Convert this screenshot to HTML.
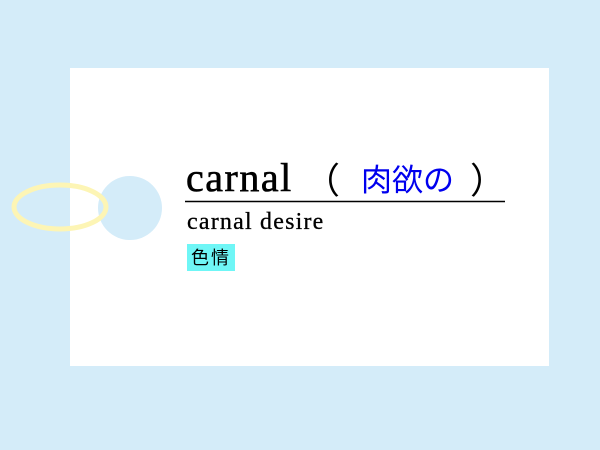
<!DOCTYPE html>
<html><head><meta charset="utf-8"><style>
html,body{margin:0;padding:0;}
body{width:600px;height:450px;background:#d4ecf9;position:relative;overflow:hidden;font-family:"Liberation Serif","Noto Serif CJK SC",serif;}
.card{position:absolute;left:70px;top:68px;width:479px;height:298px;background:#fff;}
.t{position:absolute;white-space:nowrap;}
</style></head><body>
<div class="card"></div>
<svg style="position:absolute;left:0;top:0" width="600" height="450">
<circle cx="130" cy="208" r="32" fill="#d4ecf9"/>
<ellipse cx="60" cy="207" rx="46" ry="22" fill="none" stroke="#fdf5b5" stroke-width="5"/>
<line x1="185" y1="201.5" x2="505" y2="201.5" stroke="#000" stroke-width="1.5"/>
</svg>
<div class="t" style="left:186px;top:156px;font-size:40px;line-height:44px;letter-spacing:1.5px;-webkit-text-stroke:0.6px #000;">carnal</div>
<div class="t" style="left:304px;top:156px;font-size:36px;line-height:44px;font-family:'Noto Sans CJK JP',sans-serif;">（</div>
<div class="t" style="left:361px;top:158px;font-size:31px;line-height:40px;color:#0000ee;font-family:'Noto Sans CJK JP',sans-serif;">肉欲の</div>
<div class="t" style="left:470px;top:156px;font-size:36px;line-height:44px;font-family:'Noto Sans CJK JP',sans-serif;">）</div>
<div class="t" style="left:187px;top:207px;font-size:24px;line-height:30px;letter-spacing:1.2px;-webkit-text-stroke:0.3px #000;">carnal desire</div>
<div class="t" style="left:187px;top:244px;width:48px;height:27px;background:#6ff6f6;font-size:18px;line-height:27px;text-align:center;letter-spacing:2px;font-family:'Noto Sans CJK JP',sans-serif;">色情</div>
</body></html>
